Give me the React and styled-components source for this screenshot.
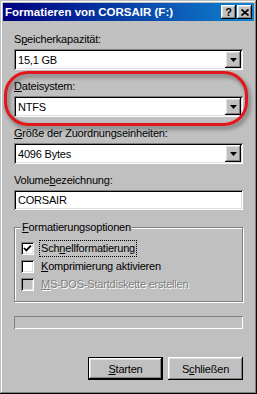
import React from "react";
import styled, { createGlobalStyle } from "styled-components";

const FACE = "#c0c0c0";
const RAISED =
  "inset -1px -1px #000, inset 1px 1px #fff, inset -2px -2px #808080, inset 2px 2px #dfdfdf";
const SUNKEN =
  "inset 1px 1px #808080, inset -1px -1px #fff, inset 2px 2px #000, inset -2px -2px #dfdfdf";

const GlobalStyle = createGlobalStyle`
  html, body {
    margin: 0;
    padding: 0;
    background: ${FACE};
  }
  body {
    font-family: "Liberation Sans", Arial, sans-serif;
  }
  * {
    box-sizing: border-box;
  }
`;

const Window = styled.div`
  position: relative;
  width: 257px;
  height: 394px;
  padding: 3px;
  background: ${FACE};
  box-shadow: inset -1px -1px #000, inset 1px 1px ${FACE}, inset -2px -2px #808080,
    inset 2px 2px #fff;
  display: flex;
  flex-direction: column;
  font-size: 11px;
  letter-spacing: -0.2px;
  color: #000;
`;

const TitleBar = styled.div`
  height: 18px;
  display: flex;
  align-items: center;
  padding: 0 2px;
  background: linear-gradient(to right, #000080, #1084d0);
`;

const Title = styled.div`
  flex: 1;
  color: #fff;
  font-weight: bold;
  font-size: 11.5px;
  letter-spacing: 0;
  line-height: 18px;
  white-space: nowrap;
`;

const CaptionButton = styled.div`
  width: 15px;
  height: 14px;
  margin-left: ${(p) => p.$gap || 0}px;
  background: ${FACE};
  box-shadow: ${RAISED};
  display: flex;
  align-items: center;
  justify-content: center;
  font-weight: bold;
  font-size: 11px;
  letter-spacing: 0;
  line-height: 14px;
`;

const Body = styled.div`
  display: flex;
  flex-direction: column;
  padding: 12px 11px 0;
`;

const Field = styled.div`
  display: flex;
  flex-direction: column;
  gap: 3px;
  & + & {
    margin-top: 10px;
  }
`;

const Label = styled.div`
  height: 13px;
  line-height: 13px;
  white-space: nowrap;
`;

const Key = styled.span`
  text-decoration: underline;
`;

const Combo = styled.div`
  height: ${(p) => p.$h || 21}px;
  padding: 2px;
  display: flex;
  align-items: stretch;
  background: #fff;
  box-shadow: ${SUNKEN};
`;

const ComboText = styled.div`
  flex: 1;
  padding-left: 2px;
  display: flex;
  align-items: center;
  white-space: nowrap;
`;

const DropButton = styled.div`
  width: 16px;
  background: ${FACE};
  box-shadow: ${RAISED};
  display: flex;
  align-items: center;
  justify-content: center;
`;

const Group = styled.fieldset`
  margin: 11px 0 0;
  padding: 6px 6px 8px;
  min-width: 0;
  border: 1px solid #808080;
  box-shadow: inset 1px 1px #fff, 1px 1px #fff;
`;

const Legend = styled.legend`
  padding: 0 1px;
  line-height: 13px;
  background: ${FACE};
`;

const Options = styled.div`
  display: flex;
  flex-direction: column;
  gap: 1px;
`;

const CheckRow = styled.div`
  height: 17px;
  display: flex;
  align-items: center;
  gap: 5px;
  color: ${(p) => (p.$disabled ? "#808080" : "#000")};
  text-shadow: ${(p) => (p.$disabled ? "1px 1px #fff" : "none")};
`;

const Box = styled.span`
  flex: none;
  width: 13px;
  height: 13px;
  background: ${(p) => (p.$disabled ? FACE : "#fff")};
  box-shadow: ${SUNKEN};
  display: flex;
  align-items: center;
  justify-content: center;
`;

const CheckText = styled.span`
  padding: 0 1px;
  line-height: 15px;
  white-space: nowrap;
  border: 1px dotted ${(p) => (p.$focus ? "#000" : "transparent")};
`;

const Progress = styled.div`
  margin-top: 14px;
  height: 13px;
  box-shadow: inset 1px 1px #808080, inset -1px -1px #fff;
`;

const Buttons = styled.div`
  margin-top: 28px;
  display: flex;
  justify-content: flex-end;
  gap: 5px;
`;

const Button = styled.div`
  width: 75px;
  height: 23px;
  background: ${FACE};
  border: ${(p) => (p.$default ? "1px solid #000" : "0")};
  box-shadow: ${RAISED};
  display: flex;
  align-items: center;
  justify-content: center;
  white-space: nowrap;
`;

const Highlight = styled.div`
  position: absolute;
  left: 4px;
  top: 71px;
  width: 244px;
  height: 55px;
  border: 3px solid #e3161b;
  border-radius: 24px;
  filter: drop-shadow(2px 3px 2px rgba(0, 0, 0, 0.45));
  pointer-events: none;
`;

const Arrow = () => (
  <svg width="7" height="4" viewBox="0 0 7 4">
    <path d="M0 0h7L3.5 4z" fill="#000" />
  </svg>
);

const CloseGlyph = () => (
  <svg width="8" height="7" viewBox="0 0 8 7">
    <path d="M0.5 0.5L7.5 6.5M7.5 0.5L0.5 6.5" stroke="#000" strokeWidth="1.7" />
  </svg>
);

const CheckMark = () => (
  <svg width="9" height="9" viewBox="0 0 9 9">
    <polyline points="1,4 3.3,6.4 8,1.6" fill="none" stroke="#000" strokeWidth="1.8" />
  </svg>
);

function Dropdown({ value }) {
  return (
    <Combo>
      <ComboText>{value}</ComboText>
      <DropButton>
        <Arrow />
      </DropButton>
    </Combo>
  );
}

function Option({ checked, disabled, focus, children }) {
  return (
    <CheckRow $disabled={disabled}>
      <Box $disabled={disabled}>{checked && <CheckMark />}</Box>
      <CheckText $focus={focus}>{children}</CheckText>
    </CheckRow>
  );
}

export default function App() {
  return (
    <>
      <GlobalStyle />
      <Window>
        <TitleBar>
          <Title>Formatieren von CORSAIR (F:)</Title>
          <CaptionButton>?</CaptionButton>
          <CaptionButton $gap={1}>
            <CloseGlyph />
          </CaptionButton>
        </TitleBar>

        <Body>
          <Field>
            <Label>
              S<Key>p</Key>eicherkapazität:
            </Label>
            <Dropdown value="15,1 GB" />
          </Field>
          <Field>
            <Label>
              <Key>D</Key>ateisystem:
            </Label>
            <Dropdown value="NTFS" />
          </Field>
          <Field>
            <Label>
              <Key>G</Key>röße der Zuordnungseinheiten:
            </Label>
            <Dropdown value="4096 Bytes" />
          </Field>
          <Field>
            <Label>
              Volume<Key>b</Key>ezeichnung:
            </Label>
            <Combo $h={20}>
              <ComboText>CORSAIR</ComboText>
            </Combo>
          </Field>

          <Group>
            <Legend>
              <Key>F</Key>ormatierungsoptionen
            </Legend>
            <Options>
              <Option checked focus>
                Sch<Key>n</Key>ellformatierung
              </Option>
              <Option>
                <Key>K</Key>omprimierung aktivieren
              </Option>
              <Option disabled>
                <Key>M</Key>S-DOS-Startdiskette erstellen
              </Option>
            </Options>
          </Group>

          <Progress />

          <Buttons>
            <Button $default>
              <span>
                <Key>S</Key>tarten
              </span>
            </Button>
            <Button>
              <span>
                S<Key>c</Key>hließen
              </span>
            </Button>
          </Buttons>
        </Body>

        <Highlight />
      </Window>
    </>
  );
}
